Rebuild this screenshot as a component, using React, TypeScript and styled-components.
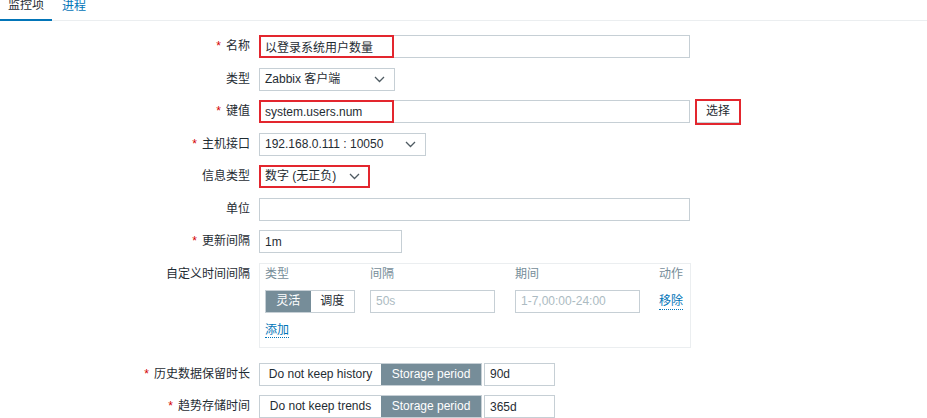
import React from "react";
import styled, { createGlobalStyle, css } from "styled-components";

const GlobalStyle = createGlobalStyle`
  body {
    margin: 0;
    background: #ffffff;
    color: #1f2c33;
    font-family: "Liberation Sans", "Noto Sans CJK SC", sans-serif;
    font-size: 12px;
    overflow: hidden;
  }
`;

const Page = styled.div`
  width: 927px;
  height: 418px;
`;

const TabBar = styled.div`
  display: flex;
  gap: 2px;
  height: 20px;
  border-bottom: 1px solid #ebeef0;
  align-items: flex-end;
`;

const Tab = styled.div<{ $active?: boolean }>`
  padding: 0 8px 6px;
  line-height: 16px;
  color: ${(p) => (p.$active ? "#1f2c33" : "#0275b8")};
  ${(p) =>
    p.$active &&
    css`
      border-bottom: 2px solid #0275b8;
      margin-bottom: -1px;
    `}
`;

const Form = styled.div`
  display: grid;
  grid-template-columns: 250px auto;
  column-gap: 9px;
  row-gap: 9.5px;
  padding-top: 14px;
`;

const Label = styled.div`
  text-align: right;
  line-height: 23px;
  white-space: nowrap;
`;

const Star = styled.span`
  color: #d40000;
  margin-right: 5px;
`;

const Field = styled.div<{ $after?: number }>`
  display: flex;
  align-items: flex-start;
  margin-bottom: ${(p) => p.$after ?? 0}px;
`;

const Anchor = styled.div`
  position: relative;
  display: flex;
`;

const Highlight = styled.div<{ $w: number; $h?: number; $x?: number; $y?: number }>`
  position: absolute;
  left: ${(p) => p.$x ?? 0}px;
  top: ${(p) => p.$y ?? 0}px;
  width: ${(p) => p.$w}px;
  height: ${(p) => p.$h ?? 23}px;
  box-sizing: border-box;
  border: 2px solid #e3262e;
  pointer-events: none;
`;

const TextInput = styled.input<{ $w: number }>`
  box-sizing: border-box;
  width: ${(p) => p.$w}px;
  height: 23px;
  margin: 0;
  padding: 0 5px;
  border: 1px solid #c6cfd5;
  background: #fff;
  color: #1f2c33;
  font: inherit;
  outline: none;
  &::placeholder {
    color: #acbbc2;
  }
`;

const Select = styled.div<{ $w: number }>`
  box-sizing: border-box;
  width: ${(p) => p.$w}px;
  height: 23px;
  padding: 0 9px 0 5px;
  border: 1px solid #c6cfd5;
  display: flex;
  align-items: center;
  justify-content: space-between;
  line-height: 21px;
  white-space: nowrap;
  svg {
    flex: none;
  }
`;

const Button = styled.div`
  box-sizing: border-box;
  margin-left: 5px;
  width: 46px;
  height: 23px;
  text-align: center;
  border: 1px solid #c6cfd5;
  line-height: 21px;
`;

const Segmented = styled.div<{ $w?: number }>`
  display: flex;
  border: 1px solid #c6cfd5;
  height: 23px;
  box-sizing: border-box;
  ${(p) => p.$w && `width: ${p.$w}px;`}
`;

const Segment = styled.div<{ $on?: boolean; $w: number }>`
  width: ${(p) => p.$w}px;
  text-align: center;
  line-height: 21px;
  white-space: nowrap;
  background: ${(p) => (p.$on ? "#768d99" : "#ffffff")};
  color: ${(p) => (p.$on ? "#ffffff" : "#1f2c33")};
`;

const IntervalBox = styled.div`
  box-sizing: border-box;
  width: 432px;
  border: 1px solid #ebeef0;
  padding: 1px 6px 9px 5px;
  display: grid;
  grid-template-columns: 105px 145px 144px auto;
  row-gap: 7px;
`;

const ColHead = styled.div`
  color: #768d99;
  line-height: 18px;
`;

const Link = styled.span`
  color: #0275b8;
  line-height: 16px;
  border-bottom: 1px dotted #0275b8;
  align-self: center;
  justify-self: start;
`;

const AddRow = styled.div`
  grid-column: 1 / -1;
  margin-top: 2px;
`;

const Gap = styled.div`
  width: 2px;
`;

const Chevron = () => (
  <svg width="11" height="7" viewBox="0 0 11 7">
    <path d="M1 1 L5.5 5.5 L10 1" fill="none" stroke="#4f5b62" strokeWidth="1.3" />
  </svg>
);

export default function App() {
  return (
    <Page>
      <GlobalStyle />
      <TabBar>
        <Tab $active>监控项</Tab>
        <Tab>进程</Tab>
      </TabBar>
      <Form>
        <Label>
          <Star>*</Star>名称
        </Label>
        <Field>
          <Anchor>
            <TextInput $w={431} readOnly value="以登录系统用户数量" />
            <Highlight $w={135} />
          </Anchor>
        </Field>

        <Label>类型</Label>
        <Field>
          <Select $w={136}>
            <span>Zabbix 客户端</span>
            <Chevron />
          </Select>
        </Field>

        <Label>
          <Star>*</Star>键值
        </Label>
        <Field>
          <Anchor>
            <TextInput $w={431} readOnly value="system.users.num" />
            <Highlight $w={135} />
          </Anchor>
          <Anchor>
            <Button>选择</Button>
            <Highlight $w={46} $h={26} $x={5} $y={-1} />
          </Anchor>
        </Field>

        <Label>
          <Star>*</Star>主机接口
        </Label>
        <Field>
          <Select $w={167}>
            <span>192.168.0.111 : 10050</span>
            <Chevron />
          </Select>
        </Field>

        <Label>信息类型</Label>
        <Field>
          <Anchor>
            <Select $w={111}>
              <span>数字 (无正负)</span>
              <Chevron />
            </Select>
            <Highlight $w={111} />
          </Anchor>
        </Field>

        <Label>单位</Label>
        <Field>
          <TextInput $w={431} readOnly value="" />
        </Field>

        <Label>
          <Star>*</Star>更新间隔
        </Label>
        <Field>
          <TextInput $w={143} readOnly value="1m" />
        </Field>

        <Label>自定义时间间隔</Label>
        <Field $after={5.5}>
          <IntervalBox>
            <ColHead>类型</ColHead>
            <ColHead>间隔</ColHead>
            <ColHead>期间</ColHead>
            <ColHead>动作</ColHead>
            <Segmented $w={90}>
              <Segment $on $w={45}>灵活</Segment>
              <Segment $w={44}>调度</Segment>
            </Segmented>
            <TextInput $w={125} readOnly placeholder="50s" />
            <TextInput $w={125} readOnly placeholder="1-7,00:00-24:00" />
            <Link>移除</Link>
            <AddRow>
              <Link>添加</Link>
            </AddRow>
          </IntervalBox>
        </Field>

        <Label>
          <Star>*</Star>历史数据保留时长
        </Label>
        <Field>
          <Segmented>
            <Segment $w={121}>Do not keep history</Segment>
            <Segment $on $w={100}>Storage period</Segment>
          </Segmented>
          <Gap />
          <TextInput $w={71} readOnly value="90d" />
        </Field>

        <Label>
          <Star>*</Star>趋势存储时间
        </Label>
        <Field>
          <Segmented>
            <Segment $w={121}>Do not keep trends</Segment>
            <Segment $on $w={100}>Storage period</Segment>
          </Segmented>
          <Gap />
          <TextInput $w={71} readOnly value="365d" />
        </Field>
      </Form>
    </Page>
  );
}
